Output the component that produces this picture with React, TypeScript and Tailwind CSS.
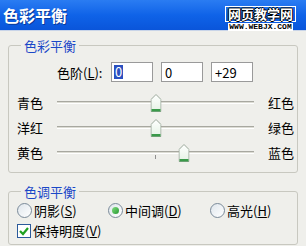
import React from "react";

const CJK = "font-['Noto_Sans_CJK_SC','Noto_Sans',sans-serif]";

// slider value -100..100
const sliders = [
  { left: "青色", right: "红色", value: 0, tick: false },
  { left: "洋红", right: "绿色", value: 0, tick: false },
  { left: "黄色", right: "蓝色", value: 29, tick: true },
];

const Thumb: React.FC = () => (
  <svg width="11" height="18" viewBox="0 0 11 18">
    <defs>
      <linearGradient id="tg" x1="0" y1="0" x2="0" y2="1">
        <stop offset="0" stopColor="#ffffff" />
        <stop offset="1" stopColor="#e4f2e4" />
      </linearGradient>
    </defs>
    <path d="M0.5 17.5 V5.5 L5.5 0.5 L10.5 5.5 V17.5 Z" fill="url(#tg)" stroke="#9aa89a" />
    <rect x="1" y="15" width="9" height="2.5" fill="#3a9a4a" />
  </svg>
);

const Slider: React.FC<{ left: string; right: string; value: number; tick: boolean }> = ({ left, right, value, tick }) => {
  const pct = (value + 100) / 2;
  return (
    <div className="flex items-center h-[25px] pl-[8px]">
      <span className="w-[40px] text-black">{left}</span>
      <div className="relative w-[197px] h-[20px] flex items-center">
        <div className="w-full h-[3px] border-t border-t-[#a8a8a0] border-b border-b-white bg-[#dcdcd4]" />
        {tick && <div className="absolute left-[98px] top-[12px] w-px h-[4px] bg-[#909090]" />}
        <div className="absolute top-[1px] -translate-x-1/2" style={{ left: `${pct}%` }}>
          <Thumb />
        </div>
      </div>
      <span className="ml-[14px] text-black">{right}</span>
    </div>
  );
};

const Radio: React.FC<{ checked?: boolean; label: React.ReactNode }> = ({ checked, label }) => (
  <div className="flex items-center gap-[2px]">
    <span className="w-[15px] h-[15px] rounded-full border border-[#7a8a99] bg-gradient-to-br from-[#dfe6ec] to-white flex items-center justify-center">
      {checked && <span className="w-[7px] h-[7px] rounded-full bg-gradient-to-br from-[#7fdc7f] to-[#1f9a2f]" />}
    </span>
    <span>{label}</span>
  </div>
);

const U: React.FC<{ c: string }> = ({ c }) => <span className="underline">{c}</span>;

const App: React.FC = () => {
  return (
    <div className={`w-[306px] h-[246px] overflow-hidden bg-[#efefeb] ${CJK} text-[13px] leading-[17px]`}>
      {/* title bar */}
      <div className="h-[31px] bg-gradient-to-b from-[#2a7cf2] via-[#0f63e8] to-[#0a55da] flex items-center justify-between pl-[3px] pr-[10px] border-b border-b-[#c8d4e8]">
        <span className="text-white font-bold text-[16px] leading-[20px] [text-shadow:1px_1px_0_#0a3a9a]">色彩平衡</span>
        <div className="flex flex-col items-center pt-[6px]">
          <span className="px-[2px] border border-white text-white text-[13px] leading-[14px] font-bold [text-shadow:1px_0_0_#000,-1px_0_0_#000,0_1px_0_#000,0_-1px_0_#000]">
            网页教学网
          </span>
          <span className="mt-[1px] bg-white text-black text-[8px] leading-[8px] font-bold font-['Liberation_Mono',monospace] px-[1px]">
            WWW.WEBJX.COM
          </span>
        </div>
      </div>

      <div className="px-[8px] pt-[6px] flex flex-col gap-[10px]">
        {/* 色彩平衡 group */}
        <fieldset className="w-[290px] border border-[#c8c8c0] rounded-[3px] pb-[7px]">
          <legend className="ml-[12px] px-[3px] text-[#1a48c8]">色彩平衡</legend>
          <div className="flex items-center mt-[8px] pl-[48px]">
            <span className="w-[54px]">
              色阶(<U c="L" />):
            </span>
            <div className="w-[42px] h-[20px] bg-white border border-[#9a9a9a] flex items-center pl-[2px]">
              <span className="bg-[#2a50c0] text-white leading-[14px] px-px">0</span>
            </div>
            <div className="ml-[8px] w-[42px] h-[20px] bg-white border border-[#9a9a9a] flex items-center pl-[3px]">0</div>
            <div className="ml-[8px] w-[42px] h-[20px] bg-white border border-[#9a9a9a] flex items-center pl-[3px]">+29</div>
          </div>
          <div className="mt-[8px] flex flex-col">
            {sliders.map((s) => (
              <Slider key={s.left} {...s} />
            ))}
          </div>
        </fieldset>

        {/* 色调平衡 group */}
        <fieldset className="w-[290px] border border-[#c8c8c0] rounded-[3px] pb-[5px]">
          <legend className="ml-[12px] px-[3px] text-[#1a48c8]">色调平衡</legend>
          <div className="flex items-center pl-[8px] mt-[2px]">
            <div className="w-[91px]">
              <Radio label={<>阴影(<U c="S" />)</>} />
            </div>
            <div className="w-[102px]">
              <Radio checked label={<>中间调(<U c="D" />)</>} />
            </div>
            <Radio label={<>高光(<U c="H" />)</>} />
          </div>
          <div className="flex items-center gap-[2px] pl-[8px] mt-[3px]">
            <span className="w-[14px] h-[14px] border border-[#2b5a9a] bg-white flex items-center justify-center">
              <svg width="10" height="10" viewBox="0 0 10 10">
                <path d="M1 5 L4 8 L9 2" fill="none" stroke="#21a121" strokeWidth="2.2" />
              </svg>
            </span>
            <span>
              保持明度(<U c="V" />)
            </span>
          </div>
        </fieldset>
      </div>
    </div>
  );
};

export default App;
